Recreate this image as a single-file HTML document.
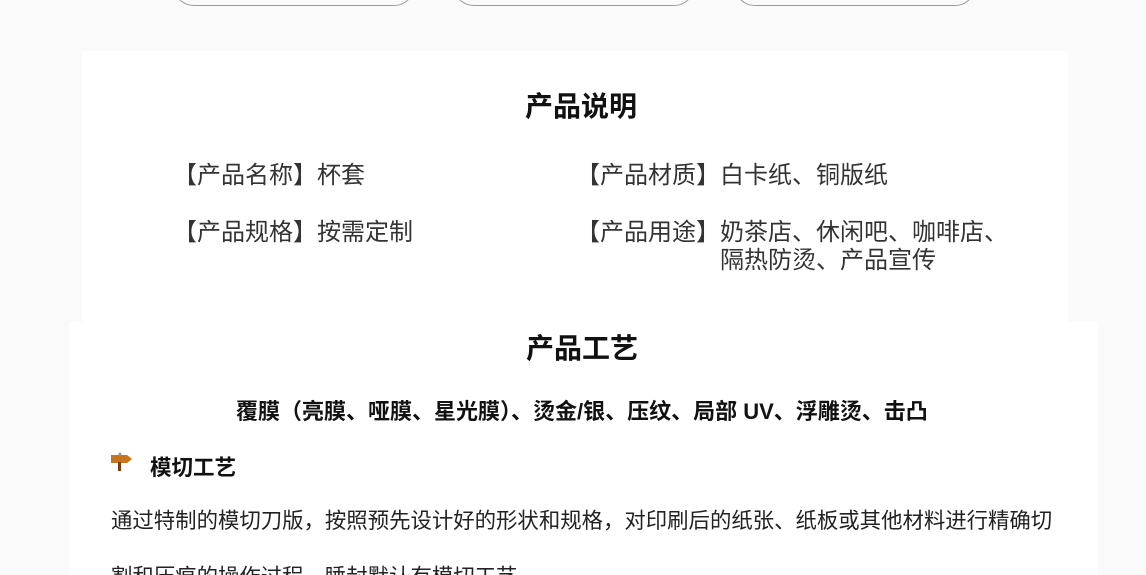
<!DOCTYPE html>
<html><head><meta charset="utf-8"><style>
html,body{margin:0;width:1146px;height:575px;overflow:hidden}
body{background:#fafafa;font-family:"Liberation Sans","Noto Sans CJK SC",sans-serif;color:#222;position:relative}
.pill{position:absolute;top:-36px;height:40px;border:1px solid #999;border-radius:22px;width:240px}
.b1{position:absolute;left:82px;top:51px;width:986px;height:271px;background:#fff}
.b2{position:absolute;left:69px;top:322px;width:1029px;height:253px;background:#fff}
.t{position:absolute;white-space:nowrap}
.h{font-weight:bold;font-size:28px;color:#111}
.r{font-size:24px;color:#333;line-height:28px}
.l{display:inline-block;width:144px}
</style></head><body>
<div class="pill" style="left:173px"></div>
<div class="pill" style="left:453px"></div>
<div class="pill" style="left:734px"></div>
<div class="b1"></div>
<div class="b2"></div>
<div class="t h" style="left:525px;top:85px">产品说明</div>
<div class="t r" style="left:173px;top:162px"><span class="l">【产品名称】</span>杯套</div>
<div class="t r" style="left:576px;top:162px"><span class="l">【产品材质】</span>白卡纸、铜版纸</div>
<div class="t r" style="left:173px;top:219px"><span class="l">【产品规格】</span>按需定制</div>
<div class="t r" style="left:576px;top:219px"><span class="l">【产品用途】</span>奶茶店、休闲吧、咖啡店、<br><span class="l"></span>隔热防烫、产品宣传</div>
<div class="t h" style="left:526px;top:327px">产品工艺</div>
<div class="t" style="left:236px;top:394px;font-size:22px;font-weight:bold;color:#111">覆膜（亮膜、哑膜、星光膜）、烫金/银、压纹、局部 UV、浮雕烫、击凸</div>
<svg class="t" style="left:110px;top:452px" width="24" height="20" viewBox="0 0 24 20"><path d="M1 3h16l5 4-5 4H1z" fill="#c8741a"/><rect x="8" y="10" width="3" height="9" fill="#7a3d10"/><circle cx="10" cy="2" r="1.5" fill="#999"/></svg>
<div class="t" style="left:150px;top:451px;font-size:21.5px;font-weight:bold;color:#111">模切工艺</div>
<div class="t" style="left:111px;top:493px;font-size:21.4px;line-height:56px;color:#222">通过特制的模切刀版，按照预先设计好的形状和规格，对印刷后的纸张、纸板或其他材料进行精确切<br>割和压痕的操作过程，睡封默认有模切工艺</div>
</body></html>
